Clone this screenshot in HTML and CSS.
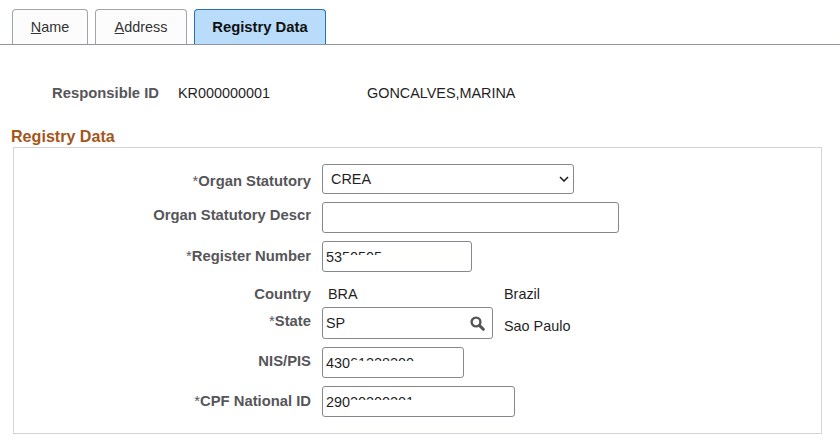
FILE: index.html
```html
<!DOCTYPE html>
<html lang="en">
<head>
<meta charset="utf-8">
<title>Registry Data</title>
<link rel="stylesheet" href="styles.css">
</head>
<body>
<nav class="tabs">
  <a class="tab tab-name"><u>N</u>ame</a>
  <a class="tab tab-address"><u>A</u>ddress</a>
  <a class="tab tab-active">Registry Data</a>
</nav>
<div class="head-row">
  <span class="label head-label">Responsible ID</span>
  <span class="head-id">KR000000001</span>
  <span>GONCALVES,MARINA</span>
</div>
<h2 class="section-title">Registry Data</h2>
<section class="panel">
  <div class="row row-organ">
    <label class="label"><span class="req">*</span>Organ Statutory</label>
    <div class="select w-select">
      <span>CREA</span>
      <svg class="chevron" width="10" height="6" viewBox="0 0 10 6"><path d="M1 1l4 4 4-4" fill="none" stroke="#222" stroke-width="1.6"/></svg>
    </div>
  </div>
  <div class="row row-descr">
    <label class="label">Organ Statutory Descr</label>
    <div class="input w-descr"></div>
  </div>
  <div class="row row-reg">
    <label class="label"><span class="req">*</span>Register Number</label>
    <div class="input w-reg"><span>53</span><span class="masked">50505</span></div>
  </div>
  <div class="row row-country">
    <label class="label">Country</label>
    <span class="code">BRA</span>
    <span class="desc">Brazil</span>
  </div>
  <div class="row row-state">
    <label class="label"><span class="req">*</span>State</label>
    <div class="input w-state">
      <span>SP</span>
      <svg class="search" width="15" height="15" viewBox="0 0 15 15"><circle cx="6" cy="6" r="4.4" fill="none" stroke="#555" stroke-width="2.4"/><path d="M9.4 9.4l3.9 3.9" stroke="#555" stroke-width="3" stroke-linecap="round"/></svg>
    </div>
    <span class="desc desc-state">Sao Paulo</span>
  </div>
  <div class="row row-nis">
    <label class="label">NIS/PIS</label>
    <div class="input w-nis"><span>430</span><span class="masked">61228200</span></div>
  </div>
  <div class="row row-cpf">
    <label class="label"><span class="req">*</span>CPF National ID</label>
    <div class="input w-cpf"><span>290</span><span class="masked">20200201</span></div>
  </div>
</section>
</body>
</html>
```

FILE: styles.css
```css
html, body { margin: 0; padding: 0; background: #fff; }
body {
  box-sizing: border-box;
  width: 840px;
  height: 448px;
  padding-top: 9px;
  overflow: hidden;
  font-family: "Liberation Sans", Arial, sans-serif;
  font-size: 14.4px;
  color: #1f1f1f;
}
.tabs {
  display: flex;
  gap: 7px;
  height: 35px;
  padding-left: 12px;
  border-bottom: 1px solid #8f9499;
}
.tab {
  box-sizing: border-box;
  height: 35px;
  display: flex;
  align-items: center;
  justify-content: center;
  border: 1px solid #a0a5aa;
  border-bottom: none;
  border-radius: 4px 4px 0 0;
  background: #fcfcfc;
  color: #333;
}
.tab-name { width: 76px; }
.tab-address { width: 92px; }
.tab-active {
  width: 132px;
  background: #b9dcfa;
  border-color: #2a6fb0;
  font-size: 14.8px;
  font-weight: 700;
  color: #111;
}
.head-row {
  display: flex;
  align-items: center;
  height: 16px;
  margin-top: 40px;
}
.label {
  font-size: 14.8px;
  font-weight: 700;
  color: #56565a;
  text-align: right;
}
.req { font-weight: 400; }
.head-label { width: 159px; flex: none; }
.head-id { width: 170px; margin-left: 19px; flex: none; }
.head-id + span { margin-left: 19px; }
.section-title {
  margin: 26px 0 0 11px;
  font-size: 16.1px;
  line-height: 18px;
  font-weight: 700;
  color: #a5561a;
}
.panel {
  box-sizing: border-box;
  width: 809px;
  height: 287px;
  margin: 2px 0 0 13px;
  padding-top: 16px;
  border: 1px solid #d2d4d6;
}
.row { display: flex; align-items: center; }
.row .label { width: 297px; flex: none; margin-right: 11px; }
.row-organ { height: 30px; }
.row-organ .label { margin-top: 3px; }
.row-descr { height: 31px; margin-top: 8px; }
.row-descr .label { margin-bottom: 5px; }
.row-reg { height: 31px; margin-top: 8px; }
.row-reg .label { margin-bottom: 2px; }
.row-country { height: 16px; margin-top: 14px; }
.row-country .label { margin-bottom: 1px; }
.row-state { height: 32px; margin-top: 5px; }
.row-state .label { margin-bottom: 5px; }
.row-nis { height: 31px; margin-top: 8px; }
.row-nis .label { margin-bottom: 4px; }
.row-cpf { height: 31px; margin-top: 8px; }
.row-cpf .label { margin-bottom: 2px; }
.input, .select {
  box-sizing: border-box;
  height: 100%;
  display: flex;
  align-items: center;
  flex: none;
  border: 1px solid #85888c;
  border-radius: 3px;
  background: #fff;
  padding-left: 3px;
}
.select { padding-left: 8px; justify-content: space-between; padding-right: 4px; }
.w-select { width: 252px; }
.w-descr { width: 297px; }
.w-reg { width: 150px; }
.w-state { width: 171px; justify-content: space-between; padding-right: 7px; }
.w-nis { width: 142px; }
.w-cpf { width: 193px; }
.masked {
  position: relative;
  display: inline-block;
  height: 16px;
  overflow: hidden;
}
.masked::after {
  content: "";
  position: absolute;
  left: 0; right: 0;
  top: 6px;
  bottom: 0;
  background: #fff;
}
.code { width: 176px; margin-left: 6px; flex: none; }
.desc-state { margin-left: 11px; margin-top: 6px; }
```
